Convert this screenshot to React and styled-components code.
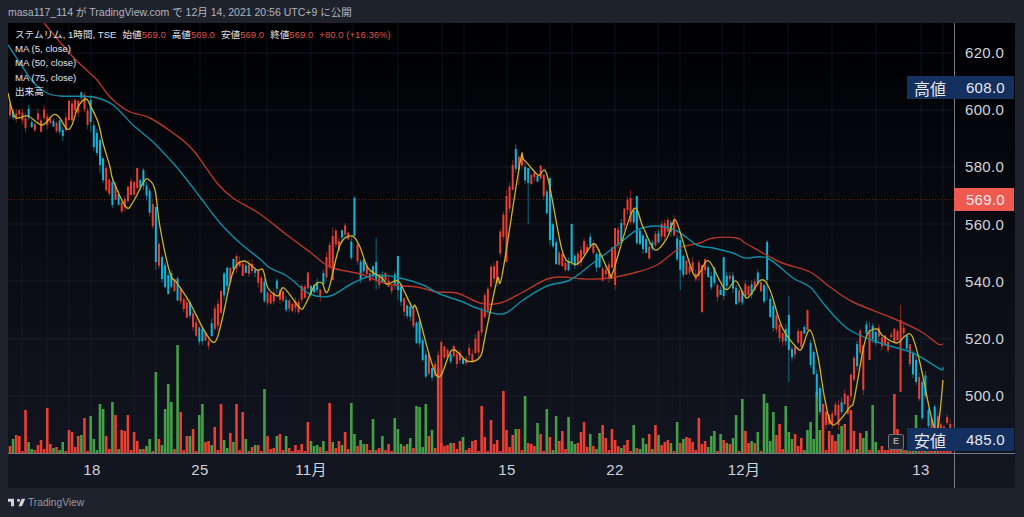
import React from "react";
import styled, { createGlobalStyle } from "styled-components";

const GlobalStyle = createGlobalStyle`
  html, body {
    margin: 0;
    height: 100%;
    background: #1e222d;
    overflow: hidden;
  }
  body {
    font-family: "Liberation Sans", "Noto Sans CJK JP", sans-serif;
  }
`;

const Page = styled.div`
  width: 1024px;
  height: 517px;
  display: flex;
  flex-direction: column;
  padding: 0 9px 0 8px;
  box-sizing: border-box;
`;

const Header = styled.div`
  height: 23px;
  line-height: 24px;
  font-size: 10.5px;
  color: #b2b5be;
  white-space: nowrap;
`;

const Frame = styled.div`
  height: 465px;
  display: flex;
  flex-direction: column;
  background: linear-gradient(180deg, #000003 0%, #131722 100%);
`;

const ChartRow = styled.div`
  position: relative;
  height: 431px;
  display: flex;
  border-bottom: 1px solid #787b86;
  box-sizing: border-box;
`;

const Pane = styled.div`
  position: relative;
  width: 946px;
  height: 100%;
  overflow: hidden;
`;

const ChartSvg = styled.svg`
  display: block;
`;

const Legend = styled.div`
  position: absolute;
  left: 7px;
  top: 5px;
  display: flex;
  flex-direction: column;
  font-size: 9.6px;
  line-height: 14.2px;
  color: #e0e3eb;
`;

const LegendTop = styled.div`
  display: flex;
  gap: 6px;
  white-space: nowrap;
`;

const Ohlc = styled.span`
  b {
    font-weight: 400;
    color: #d9534c;
  }
`;

const Change = styled.span`
  color: #d9534c;
`;

const PriceAxis = styled.div`
  width: 61px;
  border-left: 1px solid #787b86;
  box-sizing: border-box;
  padding-top: 16px;
  display: flex;
  flex-direction: column;
`;

const PriceLabel = styled.div`
  height: 57.2px;
  line-height: 28px;
  font-size: 15px;
  letter-spacing: 0.3px;
  color: #d1d4dc;
  padding-left: 10px;
`;

const Badge = styled.div`
  position: absolute;
  right: 1px;
  top: ${(p) => p.$top}px;
  width: ${(p) => p.$width}px;
  height: 23px;
  background: ${(p) => p.$bg};
  color: #e8eaf0;
  display: flex;
  align-items: center;
  justify-content: space-between;
  padding: 0 9px 0 7px;
  box-sizing: border-box;
  font-size: 15px;
  letter-spacing: 0.3px;
  span:first-child {
    font-size: 16px;
    letter-spacing: 0;
  }
`;

const EarningsMark = styled.div`
  position: absolute;
  left: 880px;
  top: 411px;
  width: 16px;
  height: 16px;
  border: 1.5px solid #6f727d;
  border-radius: 2px;
  box-sizing: border-box;
  background: #1e222d;
  color: #a3a6af;
  font-size: 9px;
  font-weight: 700;
  text-align: center;
  line-height: 13px;
`;

const TimeRow = styled.div`
  position: relative;
  height: 34px;
  &::after {
    content: "";
    position: absolute;
    left: 946px;
    top: 0;
    bottom: 0;
    width: 1px;
    background: #787b86;
  }
`;

const TimeLabel = styled.span`
  position: absolute;
  left: ${(p) => p.$x - 8}px;
  top: 7px;
  transform: translateX(-50%);
  font-size: 15px;
  line-height: 18px;
  letter-spacing: 0.3px;
  color: #d1d4dc;
`;

const Footer = styled.div`
  flex: 1;
  display: flex;
  align-items: center;
  gap: 3px;
  padding-bottom: 1px;
`;

const Brand = styled.span`
  font-size: 10.2px;
  color: #9598a1;
`;

const yellowPts = [[8,93],[15,117],[28,116],[42,125],[53,115],[59,117],[67,129],[72,125],[78,107],[86,99],[90,105],[98,122],[103,143],[110,167],[113,180],[126,207],[133,202],[143,183],[148,179],[155,190],[160,227],[170,273],[177,283],[190,303],[205,332],[215,342],[222,320],[233,272],[244,261],[257,270],[263,270],[268,288],[278,296],[284,288],[300,308],[305,305],[315,285],[322,283],[328,291],[340,245],[352,236],[360,247],[368,268],[382,278],[387,284],[395,281],[400,283],[412,307],[417,310],[437,376],[452,350],[467,361],[480,357],[485,337],[497,280],[502,276],[520,163],[524,160],[538,175],[547,175],[562,250],[572,263],[580,262],[593,244],[600,253],[610,274],[613,272],[633,210],[643,227],[655,250],[667,238],[672,225],[677,223],[693,273],[700,272],[709,261],[725,289],[736,281],[747,298],[761,280],[770,290],[782,327],[797,348],[802,348],[810,330],[818,357],[825,400],[833,425],[850,407],[854,400],[863,350],[868,333],[877,329],[883,336],[897,343],[905,336],[912,336],[920,363],[932,420],[938,427],[943,380]];

const tealPts = [[8,45],[20,63],[33,82],[47,93],[60,96],[93,97],[113,105],[133,125],[153,142],[173,163],[187,180],[200,197],[220,223],[240,243],[260,259],[270,268],[287,276],[310,294],[330,296],[353,283],[375,275],[400,278],[423,285],[440,294],[463,302],[477,308],[503,314],[523,300],[547,286],[570,280],[593,263],[620,243],[637,230],[657,226],[677,231],[697,245],[713,248],[733,253],[745,258],[767,258],[793,278],[810,287],[823,303],[840,322],[853,332],[880,343],[913,353],[940,369],[943,367]];

const redPts = [[44,23],[73,57],[97,80],[110,97],[128,111],[150,118],[173,133],[193,150],[217,183],[233,198],[260,214],[287,235],[310,252],[330,267],[360,274],[387,284],[417,287],[437,292],[457,293],[480,303],[500,303],[523,292],[547,279],[563,277],[583,279],[610,278],[637,272],[657,265],[680,248],[700,243],[713,238],[737,238],[747,244],[780,262],[810,272],[830,287],[853,302],[890,317],[920,331],[938,344],[943,344]];

const volumeData = "r7 g14 r18 r17 r2 r43 g11 g4 r3 r8 r13 r4 r45 r9 g5 r6 g3 g11 r2 r23 r21 r6 r17 g18 r35 r2 g37 g14 g3 g49 g44 r17 r4 g51 r38 g4 r23 r22 r38 r3 r21 r12 g4 r4 g7 g14 r2 g81 r14 g8 g44 g69 g51 r4 g108 r41 r3 r17 g17 r24 r2 g38 g49 r11 r12 g8 r26 r3 r49 g13 g5 r20 g11 r49 r3 r41 g14 r2 r6 g8 r8 r2 g64 r17 r4 r5 g17 r19 r3 g17 r5 r2 r8 r3 r9 r2 r31 g12 g7 g8 r6 g12 r2 r50 g11 r5 r12 g8 r21 r4 g50 g19 r7 g13 g9 r9 r3 g34 r3 r5 g17 r3 r9 r2 g35 g24 g9 r7 g9 g15 r5 g47 g46 g6 g49 r17 g23 r5 r85 r10 r7 r8 g10 r10 r4 r12 g16 r3 r5 r12 r13 r2 r47 r16 r2 r33 r9 r13 r2 r62 r23 r6 r18 g24 r24 r3 g57 r10 r9 r7 g30 r19 r2 g44 r16 g3 g37 r12 r22 r4 g36 g12 g9 r10 r21 r31 r6 g19 r7 g4 g20 r28 r15 r3 r24 r13 r7 g5 r8 r13 r2 g28 r5 g4 g15 g9 r19 g4 r28 g18 r8 r11 r13 g10 r2 g31 r10 g14 r16 r15 r11 r3 r35 r9 r12 g6 g17 g22 r2 g19 r13 g10 r9 g15 g38 r2 g54 r22 r10 g12 r10 g21 r2 g59 g50 g12 g41 r18 r29 r4 g47 g21 g14 r19 r7 r15 g3 g23 g31 g14 g61 g23 r49 r3 r22 r18 r12 g19 g27 r29 r3 r43 r22 g4 r20 g15 g22 r3 g48 g11 r3 r7 r3 r3 r3 r59 r24 g5 r3 g3 r3 g3 g38 r4 r3 g3 r3 r3 g3 r3 r3 r3 r3 r2"
  .split(" ")
  .map((v) => ({ color: v[0], h: Number(v.slice(1)) }));

// bigger candles read off the picture: x, high, low, body top, body bottom, colour
const keyCandles = [
  [92, 95, 132, 100, 122, "t"], [101, 137, 173, 140, 165, "t"], [113, 180, 208, 182, 205, "t"],
  [138, 168, 190, 168, 188, "r"], [142, 168, 190, 170, 186, "t"], [157, 207, 270, 207, 262, "t"],
  [353, 196, 236, 198, 236, "t"], [332, 227, 280, 236, 280, "r"], [375, 238, 290, 262, 280, "t"],
  [397, 256, 300, 256, 290, "t"], [440, 340, 453, 342, 453, "r"], [506, 190, 262, 196, 262, "r"],
  [514, 160, 190, 165, 190, "r"], [518, 155, 185, 157, 170, "r"], [528, 168, 224, 168, 183, "t"],
  [549, 178, 245, 178, 240, "t"], [572, 224, 265, 224, 262, "t"], [615, 228, 290, 228, 285, "r"],
  [637, 196, 245, 196, 243, "t"], [630, 190, 225, 198, 222, "r"], [702, 265, 313, 265, 312, "r"],
  [724, 257, 300, 257, 296, "t"], [681, 235, 290, 240, 270, "t"], [768, 240, 300, 242, 280, "t"],
  [789, 296, 382, 315, 350, "t"], [806, 310, 330, 310, 330, "r"], [902, 305, 392, 320, 392, "r"],
  [921, 380, 420, 382, 418, "t"], [864, 345, 395, 345, 390, "r"], [869, 322, 360, 330, 360, "r"],
  [820, 385, 415, 388, 412, "t"], [929, 408, 428, 410, 426, "t"], [837, 400, 430, 405, 425, "r"],
];

const sample = (pts, x) => {
  if (x <= pts[0][0]) return pts[0][1];
  for (let i = 1; i < pts.length; i++) {
    if (x <= pts[i][0]) {
      const [x0, y0] = pts[i - 1];
      const [x1, y1] = pts[i];
      return y0 + ((y1 - y0) * (x - x0)) / (x1 - x0);
    }
  }
  return pts[pts.length - 1][1];
};

const smooth = (pts) => {
  let d = `M${pts[0][0]} ${pts[0][1]}`;
  for (let i = 0; i < pts.length - 1; i++) {
    const p0 = pts[i - 1] || pts[i];
    const p1 = pts[i];
    const p2 = pts[i + 1];
    const p3 = pts[i + 2] || p2;
    const c1x = p1[0] + (p2[0] - p0[0]) / 6;
    const c1y = p1[1] + (p2[1] - p0[1]) / 6;
    const c2x = p2[0] - (p3[0] - p1[0]) / 6;
    const c2y = p2[1] - (p3[1] - p1[1]) / 6;
    d += `C${c1x.toFixed(1)} ${c1y.toFixed(1)} ${c2x.toFixed(1)} ${c2y.toFixed(1)} ${p2[0]} ${p2[1]}`;
  }
  return d;
};

let seed = 117;
const rnd = () => {
  seed = (seed * 16807) % 2147483647;
  return seed / 2147483647;
};

const COLORS = { r: "#ea3f33", g: "#43a047", t: "#12b5d6" };

const barX = (i) => 10 + i * 3.103;

const candles = volumeData.map((v, i) => {
  const x = barX(i);
  const key = keyCandles.find((k) => Math.abs(k[0] - x) < 1.6);
  if (key) {
    return { x, high: key[1], low: key[2], top: key[3], bottom: key[4], color: COLORS[key[5]] };
  }
  // the last bars sit at the low, the moving average only turns up after them
  const lead = x > 925 ? 0 : 6;
  const base = x > 932 ? 424 : sample(yellowPts, x + lead);
  const mid = base + (rnd() - 0.5) * 14;
  const slope = Math.abs(sample(yellowPts, x + 8) - sample(yellowPts, x + 2));
  const half = Math.min(11, 0.8 + v.h * 0.05 + rnd() * 2.5 + slope * 0.35);
  const top = mid - half;
  const bottom = mid + half;
  return {
    x,
    top,
    bottom,
    high: top - rnd() * 5,
    low: bottom + rnd() * 5,
    color: v.color === "r" ? COLORS.r : COLORS.t,
  };
});

const gridX = [22, 47, 69, 91, 134, 156, 200, 245, 267, 311, 353, 398, 442, 464, 507, 550, 572, 615, 658, 680, 722, 744, 788, 832, 876, 921, 943];
const gridY = [53, 110, 167, 224, 281, 339, 396];
const prices = ["620.0", "600.0", "580.0", "560.0", "540.0", "520.0", "500.0"];
const timeLabels = [["18", 92], ["25", 200], ["11月", 311], ["15", 507], ["22", 615], ["12月", 744], ["13", 921]];

function Chart() {
  return (
    <ChartSvg width="946" height="430" viewBox="8 23 946 430">
      {gridX.map((x) => (
        <line key={x} x1={x} x2={x} y1="23" y2="453" stroke="#2a2e39" strokeOpacity="0.35" />
      ))}
      {gridY.map((y) => (
        <line key={y} x1="8" x2="954" y1={y} y2={y} stroke="#2a2e39" strokeOpacity="0.5" />
      ))}
      <line x1="8" x2="954" y1="199.5" y2="199.5" stroke="#c0392b" strokeOpacity="0.55" strokeDasharray="1 2" />
      {volumeData.map((v, i) => (
        <rect key={i} x={barX(i) - 1.3} y={453 - v.h} width="2.6" height={v.h} fill={COLORS[v.color]} />
      ))}
      {candles.map((c, i) => (
        <g key={i}>
          <line x1={c.x} x2={c.x} y1={c.high} y2={c.low} stroke={c.color} strokeOpacity="0.55" />
          <rect x={c.x - 1} y={c.top} width="2" height={c.bottom - c.top} fill={c.color} />
        </g>
      ))}
      <path d={smooth(redPts)} fill="none" stroke="#b5372c" strokeWidth="1.4" />
      <path d={smooth(tealPts)} fill="none" stroke="#0f8ca3" strokeWidth="1.4" />
      <path d={smooth(yellowPts)} fill="none" stroke="#cdb42a" strokeWidth="1.3" />
    </ChartSvg>
  );
}

function TvLogo() {
  return (
    <svg width="17" height="9" viewBox="2 6 34 15">
      <path fill="#d1d4dc" d="M14 6H2v6h6v9h6V6Zm16 15h-7l6.5-15h7L30 21Zm-7-15a3 3 0 1 1 0 6 3 3 0 0 1 0-6Z" />
    </svg>
  );
}

export default function App() {
  return (
    <Page>
      <GlobalStyle />
      <Header>masa117_114 が TradingView.com で 12月 14, 2021 20:56 UTC+9 に公開</Header>
      <Frame>
        <ChartRow>
          <Pane>
            <Chart />
            <Legend>
              <LegendTop>
                <span>ステムリム, 1時間, TSE</span>
                <Ohlc>始値<b>569.0</b></Ohlc>
                <Ohlc>高値<b>569.0</b></Ohlc>
                <Ohlc>安値<b>569.0</b></Ohlc>
                <Ohlc>終値<b>569.0</b></Ohlc>
                <Change>+80.0 (+16.36%)</Change>
              </LegendTop>
              <span>MA (5, close)</span>
              <span>MA (50, close)</span>
              <span>MA (75, close)</span>
              <span>出来高</span>
            </Legend>
            <EarningsMark>E</EarningsMark>
          </Pane>
          <PriceAxis>
            {prices.map((p) => (
              <PriceLabel key={p}>{p}</PriceLabel>
            ))}
          </PriceAxis>
          <Badge $top={53} $width={107} $bg="#14305f"><span>高値</span><span>608.0</span></Badge>
          <Badge $top={165} $width={60} $bg="#ef5a50"><span /><span>569.0</span></Badge>
          <Badge $top={405} $width={107} $bg="#14305f"><span>安値</span><span>485.0</span></Badge>
        </ChartRow>
        <TimeRow>
          {timeLabels.map(([t, x]) => (
            <TimeLabel key={t} $x={x}>{t}</TimeLabel>
          ))}
        </TimeRow>
      </Frame>
      <Footer>
        <TvLogo />
        <Brand>TradingView</Brand>
      </Footer>
    </Page>
  );
}
